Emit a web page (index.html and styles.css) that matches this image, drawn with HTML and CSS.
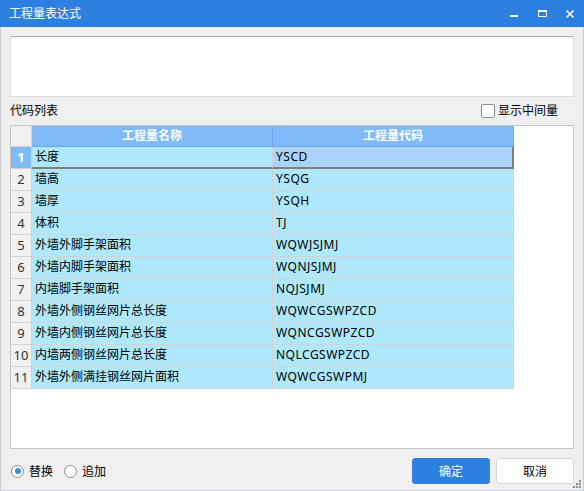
FILE: index.html
```html
<!DOCTYPE html>
<html lang="zh-CN">
<head>
<meta charset="utf-8">
<title>工程量表达式</title>
<link rel="stylesheet" href="styles.css">
</head>
<body>
<div class="window">
  <div class="titlebar">
    <span class="title">工程量表达式</span>
    <div class="controls">
      <span class="ctl"><svg width="28" height="27" viewBox="0 0 28 27"><rect x="10" y="15" width="8" height="2" fill="#fff"/></svg></span>
      <span class="ctl"><svg width="28" height="27" viewBox="0 0 28 27"><path d="M10.5 10.5h8v6h-8z" fill="none" stroke="#fff" stroke-width="1"/><rect x="10" y="10" width="9" height="2" fill="#fff"/></svg></span>
      <span class="ctl"><svg width="28" height="27" viewBox="0 0 28 27"><path d="M10.5 10.5L17.5 17.5M17.5 10.5L10.5 17.5" stroke="#fff" stroke-width="1.6" fill="none"/></svg></span>
    </div>
  </div>
  <div class="body">
    <div class="expr"></div>
    <div class="labelrow">
      <span>代码列表</span>
      <label class="check"><span class="box"></span>显示中间量</label>
    </div>
    <div class="grid">
      <div class="row head">
        <div class="cell rh corner"></div>
        <div class="cell c">工程量名称</div>
        <div class="cell c">工程量代码</div>
      </div>
      <div class="row cur">
        <div class="cell rh sel">1</div>
        <div class="cell c">长度</div>
        <div class="cell c code focus">YSCD</div>
      </div>
      <div class="row"><div class="cell rh">2</div><div class="cell c">墙高</div><div class="cell c code">YSQG</div></div>
      <div class="row"><div class="cell rh">3</div><div class="cell c">墙厚</div><div class="cell c code">YSQH</div></div>
      <div class="row"><div class="cell rh">4</div><div class="cell c">体积</div><div class="cell c code">TJ</div></div>
      <div class="row"><div class="cell rh">5</div><div class="cell c">外墙外脚手架面积</div><div class="cell c code">WQWJSJMJ</div></div>
      <div class="row"><div class="cell rh">6</div><div class="cell c">外墙内脚手架面积</div><div class="cell c code">WQNJSJMJ</div></div>
      <div class="row"><div class="cell rh">7</div><div class="cell c">内墙脚手架面积</div><div class="cell c code">NQJSJMJ</div></div>
      <div class="row"><div class="cell rh">8</div><div class="cell c">外墙外侧钢丝网片总长度</div><div class="cell c code">WQWCGSWPZCD</div></div>
      <div class="row"><div class="cell rh">9</div><div class="cell c">外墙内侧钢丝网片总长度</div><div class="cell c code">WQNCGSWPZCD</div></div>
      <div class="row"><div class="cell rh">10</div><div class="cell c">内墙两侧钢丝网片总长度</div><div class="cell c code">NQLCGSWPZCD</div></div>
      <div class="row"><div class="cell rh">11</div><div class="cell c">外墙外侧满挂钢丝网片面积</div><div class="cell c code">WQWCGSWPMJ</div></div>
    </div>
    <div class="footer">
      <label class="radio"><span class="dot on"></span>替换</label>
      <label class="radio second"><span class="dot"></span>追加</label>
      <div class="spacer"></div>
      <button class="btn primary">确定</button>
      <button class="btn">取消</button>
    </div>
    <svg class="grip" width="10" height="10" viewBox="0 0 10 10">
      <rect x="7" y="1" width="2" height="2" fill="#8a8a8a"/>
      <rect x="4" y="4" width="2" height="2" fill="#8a8a8a"/>
      <rect x="7" y="4" width="2" height="2" fill="#8a8a8a"/>
      <rect x="1" y="7" width="2" height="2" fill="#8a8a8a"/>
      <rect x="4" y="7" width="2" height="2" fill="#8a8a8a"/>
      <rect x="7" y="7" width="2" height="2" fill="#8a8a8a"/>
    </svg>
  </div>
</div>
</body>
</html>
```
FILE: styles.css
```css
* { box-sizing: border-box; }
html, body { margin: 0; padding: 0; }
body {
  width: 584px;
  height: 491px;
  overflow: hidden;
  font-family: "Noto Sans", "Noto Sans CJK SC", sans-serif;
  font-size: 12px;
  color: #000;
  background: #efefef;
}
.window {
  width: 584px;
  height: 491px;
  display: flex;
  flex-direction: column;
}
.titlebar {
  height: 27px;
  background: #2e80e0;
  color: #fff;
  display: flex;
  align-items: center;
  padding-left: 9px;
}
.title { font-size: 12px; line-height: 27px; flex: 1; }
.controls { display: flex; height: 27px; }
.ctl { width: 28px; height: 27px; display: block; }
.ctl svg { display: block; }

.body {
  position: relative;
  flex: 1;
  background: #efefef;
  border: 1px solid #c9ccd3;
  border-top: none;
  padding: 9px 9px 0 9px;
  display: flex;
  flex-direction: column;
}
.expr {
  height: 61px;
  background: #fff;
  border: 1px solid #dcdcdc;
  border-top-color: #a9abb2;
}
.labelrow {
  height: 28px;
  display: flex;
  align-items: center;
  justify-content: space-between;
  padding-right: 16px;
  line-height: 14px;
}
.check { display: flex; align-items: center; }
.box {
  width: 14px;
  height: 14px;
  border: 1px solid #8c8c8c;
  border-radius: 2px;
  background: #fff;
  margin-right: 3px;
}
.grid {
  height: 324px;
  background: #fff;
  border: 1px solid #c6c6c6;
}
.row { display: flex; height: 22px; }
.row.head { height: 21px; }
.cell {
  border-right: 1px solid #d2d2d2;
  border-bottom: 1px solid #d2d2d2;
  line-height: 20px;
  white-space: nowrap;
  overflow: hidden;
}
.cell.rh {
  width: 21px;
  background: #f0f0f0;
  color: #333;
  text-align: center;
  font-size: 13px;
}
.cell.c {
  width: 241px;
  background: #aee8fa;
  padding-left: 3px;
}
.cell.code { letter-spacing: 0.5px; }
.head .cell.c {
  background: #80baf8;
  color: #fff;
  font-weight: bold;
  text-align: center;
  padding-left: 0;
  border-color: #6aa8ee;
  line-height: 20px;
}
.head .corner { background: #f0f0f0; }
.cell.rh.sel {
  background: #80baf8;
  color: #fff;
  font-weight: bold;
}
.row.cur .cell.c { border-bottom: 2px solid #7e7e7e; line-height: 20px; }
.cell.focus {
  background: #aad4fc;
  border-right: 2px solid #7e7e7e;
}

.footer {
  height: 40px;
  display: flex;
  align-items: center;
  padding-top: 4px;
}
.radio { display: flex; align-items: center; margin-left: 1px; }
.radio.second { margin-left: 11px; }
.dot {
  width: 13px;
  height: 13px;
  border-radius: 50%;
  border: 1px solid #8c8c8c;
  background: #fff;
  margin-right: 5px;
  display: flex;
  align-items: center;
  justify-content: center;
}
.dot.on::after {
  content: "";
  width: 6px;
  height: 6px;
  border-radius: 50%;
  background: #3b8ee8;
}
.spacer { flex: 1; }
.btn {
  width: 78px;
  height: 26px;
  border-radius: 3px;
  border: 1px solid #d6d6d6;
  background: #fff;
  font-family: "Noto Sans", "Noto Sans CJK SC", sans-serif;
  font-size: 12px;
  color: #000;
  padding: 0;
  margin-left: 6px;
}
.btn.primary {
  background: #2e80e0;
  border-color: #2e80e0;
  color: #fff;
  margin-left: 0;
}
.grip {
  position: absolute;
  right: 1px;
  bottom: 1px;
}
```
